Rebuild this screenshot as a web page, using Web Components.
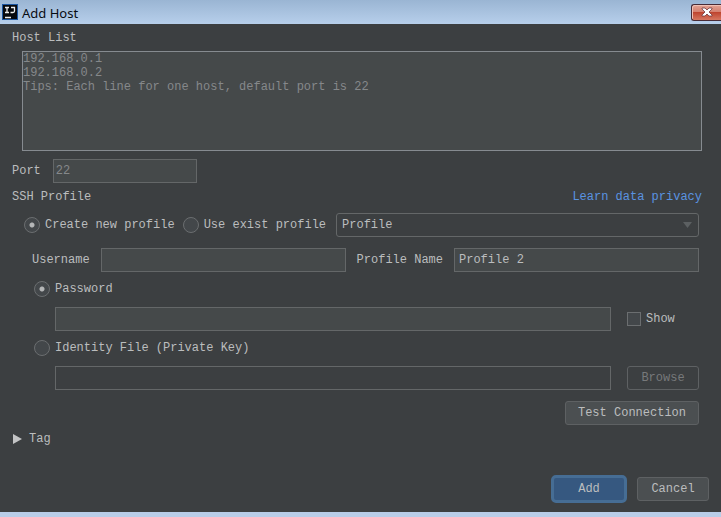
<!DOCTYPE html>
<html lang="en">
<head>
<meta charset="utf-8">
<title>Add Host</title>
<style>
  body {
    margin: 0;
    background: #3c3f41;
    font: 12px/14px "Courier New", "Liberation Mono", monospace;
    color: #bbbdbe;
  }
</style>
</head>
<body>
<dialog-window>
  <title-bar slot="title">Add Host</title-bar>
  <host-list></host-list>
  <port-field></port-field>
  <ssh-profile></ssh-profile>
  <tag-section></tag-section>
  <push-button slot="actions" kind="primary">Add</push-button>
  <push-button slot="actions">Cancel</push-button>
</dialog-window>
<script>
const base = `
  * { box-sizing: border-box; }
  input, textarea, select, button { font: inherit; color: inherit; margin: 0; outline: 0; }
  input:not([type]) {
    height: 24px; min-width: 0; padding: 0 4px;
    background: #45494a; border: 1px solid #646768; border-radius: 0;
  }
  input:not([type]):disabled { background: #3c3f41; }
  ::placeholder { color: #85888a; opacity: 1; }
  a { color: #5a93e0; text-decoration: none; }
`;

class BaseElement extends HTMLElement {
  connectedCallback() {
    if (this.shadowRoot) return;
    this.attachShadow({ mode: "open" }).innerHTML =
      `<style>${base}${this.constructor.css}</style>${this.render()}`;
  }
}

customElements.define("dialog-window", class extends BaseElement {
  static css = `
    :host { display: flex; flex-direction: column; min-height: 100vh; border-bottom: 5px solid #b9cde8; box-sizing: border-box; }
    main { flex: 1; display: flex; flex-direction: column; padding: 7px 19px 0 12px; }
    footer { display: flex; justify-content: flex-end; align-items: center; gap: 10px; padding: 0 12px 9px; }
  `;
  render() {
    return `<slot name="title"></slot><main><slot></slot></main>
      <footer><slot name="actions"></slot></footer>`;
  }
});

customElements.define("title-bar", class extends BaseElement {
  static css = `
    :host {
      display: flex; align-items: center; gap: 4px; height: 24px; padding-left: 2px;
      background: linear-gradient(#9ab5d3, #b7cfeb); color: #080c12;
      font: 13px/16px "Noto Sans", sans-serif; overflow: hidden;
    }
    svg { display: block; flex: none; }
    .text { flex: 1; padding-top: 1px; }
    button {
      width: 30px; height: 17px; padding: 0; border: 1px solid #482b36; border-right: 0;
      border-radius: 3px 0 0 3px; display: grid; place-items: center;
      background: linear-gradient(#e2a293, #d58170 45%, #bf4530 50%, #d67760);
      box-shadow: inset 1px 1px #f0c0b4;
    }
  `;
  render() {
    return `<svg width="16" height="16" viewBox="0 0 16 16" aria-hidden="true">
        <rect width="16" height="16" fill="#1c55a0"/>
        <rect x="1" y="1" width="14" height="14" fill="#06080d"/>
        <path d="M3 3.500h4M5 3.500v5M3 8.500h4M9 3.500h3.500v3.500q0 1.500-1.500 1.500H8.500M3 13.500h6" fill="none" stroke="#eee" stroke-width="1.3"/>
      </svg>
      <span class="text"><slot></slot></span>
      <button type="button" aria-label="Close"><svg width="12" height="10" viewBox="0 0 12 10">
        <path d="M1 1h3l2 2 2-2h3v1L8 5l3 3v1H8L6 7 4 9H1V8l3-3-3-3z" fill="#fff" stroke="#713b3f" stroke-width=".8"/>
      </svg></button>`;
  }
});

customElements.define("host-list", class extends BaseElement {
  static css = `
    :host { display: flex; flex-direction: column; gap: 6px; }
    textarea {
      display: block; height: 100px; margin-left: 10px; padding: 0; resize: none;
      background: #45494a; border: 1px solid #868b90; border-radius: 0;
    }
  `;
  render() {
    return `<label for="hosts">Host List</label>
      <textarea id="hosts" placeholder="192.168.0.1&#10;192.168.0.2&#10;Tips: Each line for one host, default port is 22"></textarea>`;
  }
});

customElements.define("port-field", class extends BaseElement {
  static css = `
    :host { display: flex; align-items: center; gap: 12px; margin-top: 8px; }
    input:not([type]) { width: 144px; padding: 0 2px; }
  `;
  render() {
    return `<label for="port">Port</label><input id="port" placeholder="22">`;
  }
});

customElements.define("ssh-profile", class extends BaseElement {
  static css = `
    :host { display: block; margin-top: 7px; }
    header, .row { display: flex; align-items: center; }
    header { justify-content: space-between; margin-bottom: 9px; }
    form { display: flex; flex-direction: column; padding: 0 3px 0 11px; }
    label { white-space: nowrap; }
    .option { display: flex; align-items: center; gap: 5px; }
    [type=radio], [type=checkbox] {
      appearance: none; flex: none; border: 1px solid #6b6e70; background: #43474a;
    }
    [type=radio] { width: 16px; height: 16px; border-radius: 50%; }
    [type=radio]:checked { background: radial-gradient(circle, #b4b6b7 2px, #43474a 3px); }
    [type=checkbox] { width: 14px; height: 14px; }
    .mode { gap: 8px; padding-left: 1px; }
    .pick { flex: 1; display: grid; align-items: center; margin-left: 2px; }
    .pick > * { grid-area: 1 / 1; }
    .pick svg { justify-self: end; margin-right: 7px; pointer-events: none; }
    select {
      appearance: none; width: 100%; height: 24px; padding: 0 5px; border: 1px solid #646768;
      border-radius: 3px; background: #3c3f41;
    }
    .names { gap: 11px; margin-top: 11px; padding-left: 9px; }
    .names input { flex: 1; width: 0; }
    .auth { height: 16px; margin: 9px 0 10px 11px; align-self: flex-start; }
    .secret { display: grid; grid-template-columns: 1fr 72px; gap: 16px; align-items: center; padding-left: 32px; }
    .secret input:not([type]) { width: 100%; }
    .test { align-self: flex-end; margin-top: 11px; }
  `;
  render() {
    return `<header><span>SSH Profile</span><a href="#privacy">Learn data privacy</a></header>
      <form>
        <div class="row mode">
          <label class="option"><input type="radio" name="mode" checked>Create new profile</label>
          <label class="option"><input type="radio" name="mode">Use exist profile</label>
          <div class="pick">
            <select aria-label="Existing profile"><option>Profile</option></select>
            <svg width="9" height="6" viewBox="0 0 9 6" aria-hidden="true"><path d="M0 0h9L4.500 6z" fill="#5c6062"/></svg>
          </div>
        </div>
        <div class="row names">
          <label for="user">Username</label><input id="user">
          <label for="name">Profile Name</label><input id="name" value="Profile 2">
        </div>
        <label class="option auth"><input type="radio" name="auth" checked>Password</label>
        <div class="secret">
          <input aria-label="Password">
          <label class="option"><input type="checkbox">Show</label>
        </div>
        <label class="option auth"><input type="radio" name="auth">Identity File (Private Key)</label>
        <div class="secret">
          <input aria-label="Identity file path" disabled>
          <push-button kind="disabled">Browse</push-button>
        </div>
        <push-button class="test">Test Connection</push-button>
      </form>`;
  }
});

customElements.define("tag-section", class extends BaseElement {
  static css = `
    :host { display: block; margin-top: 7px; padding-bottom: 8px; }
    button { display: flex; align-items: center; gap: 7px; padding: 0 0 0 1px; border: 0; background: none; }
  `;
  render() {
    return `<button type="button" aria-expanded="false">
      <svg width="9" height="10" viewBox="0 0 9 10" aria-hidden="true"><path d="M0 0l9 5-9 5z" fill="#c3c4c5"/></svg>Tag</button>`;
  }
});

customElements.define("push-button", class extends BaseElement {
  static css = `
    :host { display: block; }
    button {
      display: block; width: 100%; min-width: 72px; height: 24px; padding: 0 12px; white-space: nowrap;
      background: #4b4f51; border: 1px solid #5e6163; border-radius: 3px;
    }
    :host([kind=disabled]) button { background: #3c3f41; color: #77797b; }
    :host([kind=primary]) button {
      min-width: 76px; height: 28px; background: #365880;
      border: 3px solid #466d94; border-radius: 5px;
    }
  `;
  render() {
    const off = this.getAttribute("kind") === "disabled" ? "disabled" : "";
    return `<button type="button" ${off}><slot></slot></button>`;
  }
});
</script>
</body>
</html>
